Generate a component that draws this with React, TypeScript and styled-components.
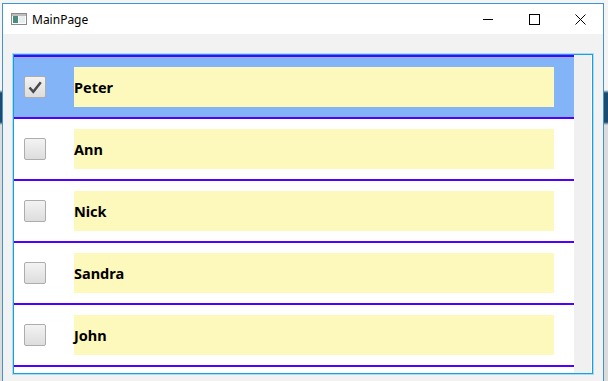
import React from "react";
import styled, { createGlobalStyle } from "styled-components";

const GlobalStyle = createGlobalStyle`
  html, body {
    margin: 0;
    padding: 0;
    background: #e8e8e8;
    overflow: hidden;
  }
  * { box-sizing: border-box; }
`;

const Desktop = styled.div`
  width: 608px;
  height: 381px;
  padding: 3px 0 0 2px;
  position: relative;
  overflow: hidden;
  background: linear-gradient(to bottom, #f4f4f4 0, #f4f4f4 90px, #1b4b70 93px, #1b4b70 122px, #dcdcdc 125px);
`;

const Window = styled.div`
  width: 602px;
  height: 378px;
  border: 1px solid #3d94d6;
  border-bottom: none;
  background: #f2f2f2;
  display: flex;
  flex-direction: column;
`;

const TitleBar = styled.div`
  height: 30px;
  background: #ffffff;
  display: flex;
  align-items: center;
  padding-left: 8px;
  flex-shrink: 0;
`;

const Title = styled.span`
  margin-left: 5px;
  font-family: "Noto Sans", "Open Sans", sans-serif;
  font-size: 12px;
  color: #000;
  flex: 1;
`;

const CaptionButton = styled.div`
  width: 46px;
  height: 30px;
  display: flex;
  align-items: center;
  justify-content: center;
`;

const Content = styled.div`
  flex: 1;
  padding: 20px 10px 0 10px;
`;

const List = styled.div`
  width: 580px;
  height: 320px;
  border: 1px solid #1a9fdc;
  box-shadow: 0 0 0 1px #a9ddf3;
  background: #ffffff;
  display: flex;
`;

const Items = styled.div`
  width: 560px;
  overflow: hidden;
  display: flex;
  flex-direction: column;
`;

const ScrollTrack = styled.div`
  width: 17px;
  background: #f0f0f0;
`;

const Row = styled.div<{ $selected: boolean; $last: boolean }>`
  flex-shrink: 0;
  height: ${(p) => (p.$last ? 64 : 62)}px;
  border-top: 2px solid #5000ff;
  border-bottom: ${(p) => (p.$last ? "2px solid #5000ff" : "none")};
  background: ${(p) => (p.$selected ? "#84b4f8" : "#ffffff")};
  display: flex;
  align-items: center;
  padding: 0 20px 0 10px;
`;

const CheckBox = styled.div`
  width: 22px;
  height: 22px;
  border: 1px solid #adadad;
  border-radius: 2px;
  background: linear-gradient(to bottom, #f3f3f3, #dddddd);
  display: flex;
  align-items: center;
  justify-content: center;
  margin-right: 28px;
  flex-shrink: 0;
`;

const NameBox = styled.div`
  flex: 1;
  height: 40px;
  background: #fdf8bb;
  display: flex;
  align-items: center;
  font-family: "Noto Sans", "Open Sans", sans-serif;
  font-weight: 700;
  font-size: 14.5px;
  color: #000;
`;

const people = [
  { name: "Peter", checked: true },
  { name: "Ann", checked: false },
  { name: "Nick", checked: false },
  { name: "Sandra", checked: false },
  { name: "John", checked: false },
];

const AppIcon = () => (
  <svg width="16" height="12" viewBox="0 0 16 12">
    <rect x="0.5" y="0.5" width="15" height="11" fill="#ffffff" stroke="#8a8a8a" />
    <rect x="1" y="1" width="14" height="2" fill="#bdbdbd" />
    <rect x="2" y="3" width="5" height="7" fill="#4a8c7e" />
    <rect x="8" y="3" width="6" height="7" fill="#e6eeee" />
  </svg>
);

const Check = () => (
  <svg width="16" height="16" viewBox="0 0 16 16">
    <path d="M2.5 8.5 L6.3 12.8 L13.8 3.2" fill="none" stroke="#4a4a4a" strokeWidth="2.5" />
  </svg>
);

export default function App() {
  return (
    <>
      <GlobalStyle />
      <Desktop>
        <Window>
          <TitleBar>
            <AppIcon />
            <Title>MainPage</Title>
            <CaptionButton>
              <svg width="10" height="10" viewBox="0 0 10 10">
                <line x1="0" y1="5.5" x2="10" y2="5.5" stroke="#000" strokeWidth="1" />
              </svg>
            </CaptionButton>
            <CaptionButton>
              <svg width="11" height="11" viewBox="0 0 11 11">
                <rect x="0.5" y="0.5" width="10" height="10" fill="none" stroke="#000" strokeWidth="1" />
              </svg>
            </CaptionButton>
            <CaptionButton>
              <svg width="11" height="11" viewBox="0 0 11 11">
                <path d="M0.5 0.5 L10.5 10.5 M10.5 0.5 L0.5 10.5" stroke="#000" strokeWidth="1" />
              </svg>
            </CaptionButton>
          </TitleBar>
          <Content>
            <List>
              <Items>
                {people.map((p, i) => (
                  <Row key={p.name} $selected={i === 0} $last={i === people.length - 1}>
                    <CheckBox>{p.checked && <Check />}</CheckBox>
                    <NameBox>{p.name}</NameBox>
                  </Row>
                ))}
              </Items>
              <ScrollTrack />
            </List>
          </Content>
        </Window>
      </Desktop>
    </>
  );
}
